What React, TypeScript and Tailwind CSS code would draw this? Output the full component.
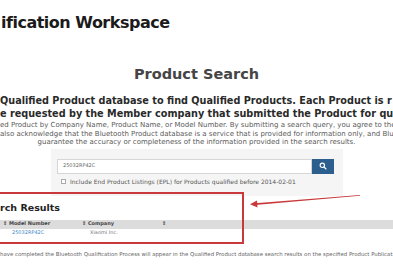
export default function App() {
  return (
    <div className="relative w-[393px] h-[267px] overflow-hidden bg-white font-['DejaVu_Sans',sans-serif]">
      {/* page header */}
      <h1 className="pt-[12px] pl-[1px] text-[16px] leading-[22px] font-bold text-[#1b1b1b] whitespace-nowrap tracking-[-0.5px]">
        ification Workspace
      </h1>

      <h2 className="mt-[29px] text-center text-[14.5px] leading-[22px] font-semibold text-[#454545]">
        Product Search
      </h2>

      {/* intro */}
      <div className="mt-[9px] text-[9.7px] leading-[13px] font-bold text-[#2a2a2a] whitespace-nowrap">
        <p>Qualified Product database to find Qualified Products. Each Product is r</p>
        <p>e requested by the Member company that submitted the Product for qu</p>
      </div>
      <div className="mt-[1px] text-[7px] leading-[8.5px] text-[#5a5a5a] whitespace-nowrap">
        <p>ed Product by Company Name, Product Name, or Model Number. By submitting a search query, you agree to the</p>
        <p>also acknowledge that the Bluetooth Product database is a service that is provided for information only, and Bluet</p>
        <p className="text-center">guarantee the accuracy or completeness of the information provided in the search results.</p>
      </div>

      {/* search panel */}
      <div className="mt-[2px] ml-[51px] w-[292px] h-[47px] bg-[#f5f5f5] pt-[10px] pl-[6px]">
        <div className="flex h-[15px] w-[277px]">
          <div className="flex-1 bg-white border border-[#d6d6d6] flex items-center pl-[5px] text-[5px] text-[#666]">
            25032RP42C
          </div>
          <div className="w-[22px] bg-[#2c5f8e] flex items-center justify-center">
            <svg width="8" height="8" viewBox="0 0 24 24" fill="none" stroke="white" strokeWidth="3.5" strokeLinecap="round">
              <circle cx="10" cy="10" r="6.5" />
              <path d="M15 15l6 6" />
            </svg>
          </div>
        </div>
        <label className="mt-[4px] flex items-center gap-[4px] pl-[4px] text-[6px] leading-[8px] text-[#555] whitespace-nowrap">
          <span className="w-[5px] h-[5px] border border-[#aaa] bg-white" />
          Include End Product Listings (EPL) for Products qualified before 2014-02-01
        </label>
      </div>

      {/* results */}
      <h3 className="mt-[4px] text-[9.5px] leading-[16px] font-bold text-[#222] whitespace-nowrap">rch Results</h3>
      <table className="mt-[4px] w-full text-[5px] whitespace-nowrap border-collapse">
        <thead>
          <tr className="h-[9px] bg-[#dcdcdc] text-[#444] text-left">
            <th className="w-[80px] pl-[3px] font-bold">⇕ Model Number</th>
            <th className="w-[81px] pl-[2px] font-bold">⇕ Company</th>
            <th className="pl-[1px] font-bold">⇕</th>
          </tr>
        </thead>
        <tbody>
          <tr className="h-[9px]">
            <td className="pl-[12px] text-[#3b88c6]">25032RP42C</td>
            <td className="pl-[10px] text-[#777]">Xiaomi Inc.</td>
            <td />
          </tr>
        </tbody>
      </table>

      <p className="mt-[12px] text-[5.4px] leading-[8px] text-[#666] whitespace-nowrap">
        have completed the Bluetooth Qualification Process will appear in the Qualified Product database search results on the specified Product Publicat
      </p>

      {/* annotation */}
      <div className="absolute left-[-6px] top-[192px] w-[250px] h-[52px] border-2 border-[#c9383a]" />
      <svg className="absolute left-[245px] top-[190px]" width="125" height="20" viewBox="0 0 125 20">
        <path d="M10 13.2 L115 5 L115 5.8 L10 15 Z" fill="#c9383a" />
        <path d="M5 14.2 L12 10.5 L12.5 17.5 Z" fill="#c9383a" />
      </svg>
    </div>
  );
}
